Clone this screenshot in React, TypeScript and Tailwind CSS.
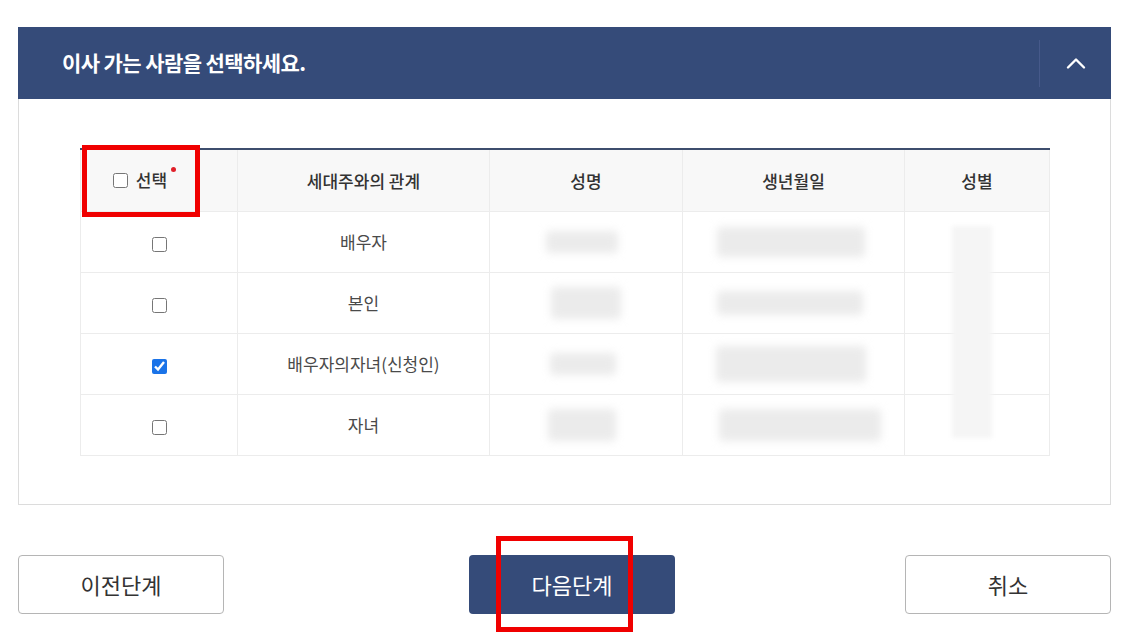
const ROWS = [
  { rel: "배우자", checked: false, name: "w-[72px] h-[22px] -translate-x-[4px]", dob: "w-[148px] h-[30px] -translate-x-[3px]" },
  { rel: "본인", checked: false, name: "w-[70px] h-[32px]", dob: "w-[146px] h-[24px] -translate-x-[4px]" },
  { rel: "배우자의자녀(신청인)", checked: true, name: "w-[66px] h-[22px] -translate-x-[3px]", dob: "w-[150px] h-[36px] -translate-x-[3px]" },
  { rel: "자녀", checked: false, name: "w-[68px] h-[32px] -translate-x-[4px]", dob: "w-[162px] h-[32px] translate-x-[6px]" },
]

function Blur({ size }: { size: string }) {
  return <div className={`${size} mx-auto rounded-sm bg-[#ebebeb] blur-[4px]`} />
}

function Chevron() {
  return (
    <svg width="20" height="14" viewBox="0 0 20 14" fill="none">
      <path d="M2 11.5 10 3.5l8 8" stroke="#fff" strokeWidth="2.4" strokeLinecap="round" strokeLinejoin="round" />
    </svg>
  )
}

export default function App() {
  return (
    <div className="w-[1130px] h-[642px] bg-white pt-[27px] px-[18px] font-['Noto_Sans_CJK_KR','Noto_Sans',sans-serif] text-[#333]">
      {/* Panel */}
      <div className="w-[1093px]">
        <div className="flex h-[72px] items-center bg-[#354b79]">
          <h2 className="flex-1 pl-[44px] text-[21px] font-bold tracking-[-0.6px] text-white">
            이사 가는 사람을 선택하세요.
          </h2>
          <div className="flex h-[47px] w-[72px] items-center justify-center border-l border-[#46598a]">
            <Chevron />
          </div>
        </div>

        <div className="h-[406px] border border-t-0 border-[#dcdcdc] px-[61px] pt-[49px]">
          <div className="relative">
            <table className="w-[969px] table-fixed border-collapse text-[17px]">
              <colgroup>
                <col className="w-[157px]" />
                <col className="w-[252px]" />
                <col className="w-[193px]" />
                <col className="w-[222px]" />
                <col className="w-[145px]" />
              </colgroup>
              <thead>
                <tr className="h-[62px] border-t-2 border-[#3d4d6d] bg-[#f8f8f8] text-[#333]">
                  <th className="border border-t-0 border-[#ececec] pr-[38px] font-medium">
                    <span className="relative inline-flex items-center gap-[8px]">
                      <input type="checkbox" className="h-[15px] w-[15px]" readOnly />
                      선택
                      <span className="absolute -right-[9px] top-[0px] h-[5px] w-[5px] rounded-full bg-[#e0202a]" />
                    </span>
                  </th>
                  <th className="border border-t-0 border-[#ececec] font-medium">세대주와의 관계</th>
                  <th className="border border-t-0 border-[#ececec] font-medium">성명</th>
                  <th className="border border-t-0 border-[#ececec] font-medium">생년월일</th>
                  <th className="border border-t-0 border-[#ececec] font-medium">성별</th>
                </tr>
              </thead>
              <tbody>
                {ROWS.map((r) => (
                  <tr key={r.rel} className="h-[61px]">
                    <td className="border border-[#ececec] text-center">
                      <input
                        type="checkbox"
                        checked={r.checked}
                        readOnly
                        className="h-[15px] w-[15px] align-middle accent-[#1a73e8]"
                      />
                    </td>
                    <td className="border border-[#ececec] text-center text-[#4a4a4a]">{r.rel}</td>
                    <td className="border border-[#ececec]"><Blur size={r.name} /></td>
                    <td className="border border-[#ececec]"><Blur size={r.dob} /></td>
                    <td className="border border-[#ececec]" />
                  </tr>
                ))}
              </tbody>
            </table>
            {/* blurred gender column */}
            <div className="absolute left-[872px] top-[78px] h-[212px] w-[40px] bg-[#f5f5f5] blur-[2px]" />
            {/* highlight on header checkbox cell */}
            <div className="absolute left-[2px] top-[-3px] h-[72px] w-[118px] border-[5px] border-[#f00000]" />
          </div>
        </div>
      </div>

      {/* Buttons */}
      <div className="mt-[50px] flex w-[1093px] items-center">
        <button className="h-[59px] w-[206px] rounded border border-[#b5b5b5] bg-white text-[22px] text-[#333]">
          이전단계
        </button>
        <div className="relative ml-[245px]">
          <button className="h-[59px] w-[206px] rounded bg-[#354b79] text-[22px] text-white">
            다음단계
          </button>
          <div className="absolute left-[27px] top-[-19px] h-[96px] w-[137px] border-[5px] border-[#f00000]" />
        </div>
        <button className="ml-[230px] h-[59px] w-[206px] rounded border border-[#b5b5b5] bg-white text-[22px] text-[#333]">
          취소
        </button>
      </div>
    </div>
  )
}
